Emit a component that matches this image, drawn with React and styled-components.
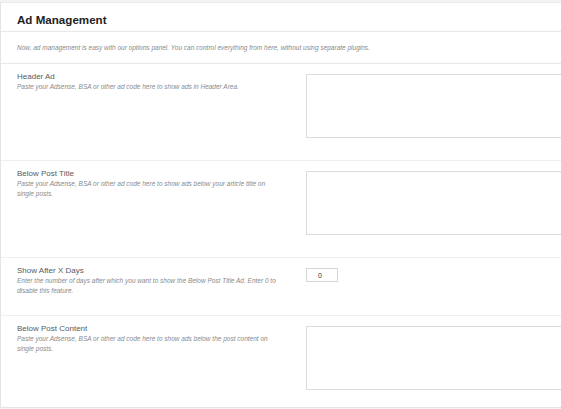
import React from "react"
import styled, { createGlobalStyle } from "styled-components"

const GlobalStyle = createGlobalStyle`
  html, body {
    margin: 0;
    padding: 0;
    background: #f3f3f3;
    overflow: hidden;
    font-family: "Liberation Sans", Arial, sans-serif;
  }
`

const fields = [
  {
    label: "Header Ad",
    desc: "Paste your Adsense, BSA or other ad code here to show ads in Header Area.",
    type: "textarea",
    pad: 22,
  },
  {
    label: "Below Post Title",
    desc: "Paste your Adsense, BSA or other ad code here to show ads below your article title on single posts.",
    type: "textarea",
    pad: 22,
  },
  {
    label: "Show After X Days",
    desc: "Enter the number of days after which you want to show the Below Post Title Ad. Enter 0 to disable this feature.",
    type: "number",
    value: "0",
    pad: 19,
  },
  {
    label: "Below Post Content",
    desc: "Paste your Adsense, BSA or other ad code here to show ads below the post content on single posts.",
    type: "textarea",
    pad: 17,
    last: true,
  },
]

const AdManagement = () => {
  return (
    <Panel>
      <Header>
        <h2>Ad Management</h2>
      </Header>
      <Intro>
        Now, ad management is easy with our options panel. You can control everything from here, without using separate plugins.
      </Intro>
      {fields.map((f) => (
        <Row key={f.label} $pad={f.pad} $last={f.last}>
          <LabelCol>
            <Label>{f.label}</Label>
            <Desc>{f.desc}</Desc>
          </LabelCol>
          <div>
            {f.type === "textarea" ? (
              <CodeArea />
            ) : (
              <SmallInput type="text" defaultValue={f.value} />
            )}
          </div>
        </Row>
      ))}
    </Panel>
  )
}

const Panel = styled.section`
  width: 720px;
  margin-top: 2px;
  background: #fff;
  border-top: 1px solid #ebebeb;
  border-left: 1px solid #e4e4e4;
  border-bottom: 1px solid #e4e4e4;
`

const Header = styled.div`
  padding: 10px 16px 4px;
  border-bottom: 1px solid #e8e8e8;

  h2 {
    margin: 0;
    font-size: 11.6px;
    line-height: 14px;
    font-weight: bold;
    color: #222;
  }
`

const Intro = styled.p`
  margin: 0;
  padding: 11px 16px 10px;
  font-size: 6.5px;
  line-height: 10px;
  font-style: italic;
  color: #8a8a8a;
  border-bottom: 1px solid #e8e8e8;
`

const Row = styled.div`
  display: grid;
  grid-template-columns: 265px auto;
  column-gap: 24px;
  padding: 8px 16px ${(p) => p.$pad}px;
  border-bottom: ${(p) => (p.$last ? "none" : "1px solid #efefef")};
`

const LabelCol = styled.div`
  display: flex;
  flex-direction: column;
`

const Label = styled.span`
  font-size: 8px;
  font-weight: normal;
  line-height: 10px;
  color: #5a5a5a;
`

const Desc = styled.span`
  font-size: 6.5px;
  line-height: 10px;
  font-style: italic;
  color: #8a8a8a;
`

const CodeArea = styled.textarea`
  display: block;
  box-sizing: border-box;
  margin-top: 2px;
  width: 340px;
  height: 64px;
  padding: 4px;
  border: 1px solid #dcdcdc;
  resize: none;
  outline: none;
  background: #fff;
`

const SmallInput = styled.input`
  display: block;
  box-sizing: border-box;
  margin-top: 2px;
  width: 32px;
  height: 14px;
  padding: 0 0 0 11px;
  border: 1px solid #d6d6d6;
  font-family: "Liberation Sans", Arial, sans-serif;
  font-size: 7px;
  color: #333;
  outline: none;
  background: #fff;
`

const App = () => (
  <>
    <GlobalStyle />
    <AdManagement />
  </>
)

export default App
